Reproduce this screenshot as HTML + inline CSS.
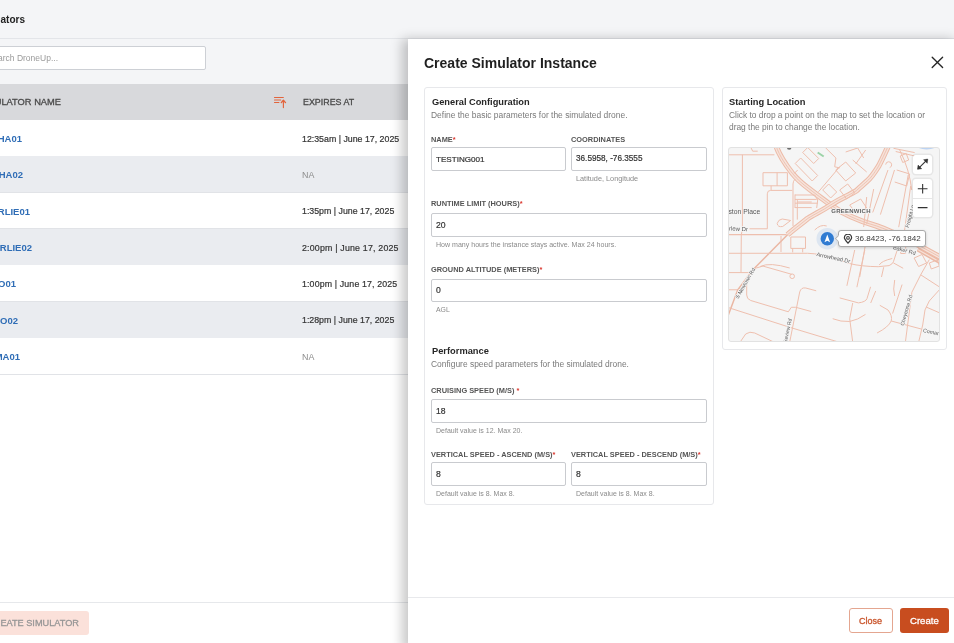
<!DOCTYPE html>
<html><head><meta charset="utf-8">
<style>
*{box-sizing:border-box;margin:0;padding:0}
html,body{width:954px;height:643px;overflow:hidden;background:#fff;font-family:"Liberation Sans",sans-serif;position:relative;-webkit-font-smoothing:antialiased}
.t{position:absolute;line-height:1;white-space:nowrap;will-change:transform}
.b{position:absolute}
</style></head><body>
<div class="b" style="left:0px;top:0px;width:954.00px;height:38.00px;background:#f4f5f7;"></div>
<div class="b" style="left:0px;top:38px;width:954.00px;height:1.00px;background:#e3e5e9;"></div>
<div class="b" style="left:0px;top:39px;width:954.00px;height:45.00px;background:#f4f5f7;"></div>
<div class="b" style="left:-10px;top:45.5px;width:216.00px;height:24.30px;background:#fff;border:1px solid #cdd0d5;border-radius:2px;"></div>
<div class="t" style="top:14.54px;font-size:10px;font-weight:bold;color:#222;left:-375.50px;width:400px;text-align:right;">Simulators</div>
<div class="t" style="top:53.70px;font-size:8.5px;font-weight:normal;color:#9a9a9a;left:-342.50px;width:400px;text-align:right;">Search DroneUp...</div>
<div class="b" style="left:0px;top:84px;width:954.00px;height:36.00px;background:#d8d9dc;"></div>
<div class="t" style="top:97.93px;font-size:9.3px;font-weight:normal;color:#4a4a4a;left:-338.70px;width:400px;text-align:right;-webkit-text-stroke:0.3px #4a4a4a;">SIMULATOR NAME</div>
<svg class="b" style="left:272px;top:95px" width="16" height="14" viewBox="0 0 16 14"><g stroke="#e2643c" stroke-width="1.15" fill="none" stroke-linecap="round"><path d="M2.5 2.5h8.8M2.5 5h6.2M2.5 7.5h4.4"/><path d="M11.4 12.6V5.6"/><path d="M9.3 7.6l2.1-2.3 2.1 2.3" stroke-width="1.4" stroke-linejoin="round"/></g></svg>
<div class="t" style="top:98.37px;font-size:8.9px;font-weight:normal;color:#4a4a4a;left:302.50px;-webkit-text-stroke:0.3px #4a4a4a;">EXPIRES AT</div>
<div class="b" style="left:0px;top:120.0px;width:954.00px;height:36.35px;background:#ffffff;"></div>
<div class="b" style="left:0px;top:155.75px;width:954.00px;height:1.00px;background:#e1e3e7;"></div>
<div class="t" style="top:133.96px;font-size:9.5px;font-weight:bold;color:#2f6db6;left:-378.50px;width:400px;text-align:right;">HA01</div>
<div class="t" style="top:134.55px;font-size:8.8px;font-weight:normal;color:#333;letter-spacing:0px;left:302.20px;-webkit-text-stroke:0.2px #333;">12:35am | June 17, 2025</div>
<div class="b" style="left:0px;top:156.35px;width:954.00px;height:36.35px;background:#eaecf0;"></div>
<div class="b" style="left:0px;top:192.1px;width:954.00px;height:1.00px;background:#e1e3e7;"></div>
<div class="t" style="top:170.31px;font-size:9.5px;font-weight:bold;color:#2f6db6;left:-377.10px;width:400px;text-align:right;">HA02</div>
<div class="t" style="top:170.82px;font-size:8.9px;font-weight:normal;color:#8c8c8c;left:302.20px;">NA</div>
<div class="b" style="left:0px;top:192.7px;width:954.00px;height:36.35px;background:#ffffff;"></div>
<div class="b" style="left:0px;top:228.45px;width:954.00px;height:1.00px;background:#e1e3e7;"></div>
<div class="t" style="top:206.66px;font-size:9.5px;font-weight:bold;color:#2f6db6;left:-370.30px;width:400px;text-align:right;">RLIE01</div>
<div class="t" style="top:207.25px;font-size:8.8px;font-weight:normal;color:#333;letter-spacing:0px;left:302.20px;-webkit-text-stroke:0.2px #333;">1:35pm | June 17, 2025</div>
<div class="b" style="left:0px;top:229.05px;width:954.00px;height:36.35px;background:#eaecf0;"></div>
<div class="b" style="left:0px;top:264.8px;width:954.00px;height:1.00px;background:#e1e3e7;"></div>
<div class="t" style="top:243.01px;font-size:9.5px;font-weight:bold;color:#2f6db6;left:-368.40px;width:400px;text-align:right;">RLIE02</div>
<div class="t" style="top:243.60px;font-size:8.8px;font-weight:normal;color:#333;letter-spacing:0.2px;left:302.20px;-webkit-text-stroke:0.2px #333;">2:00pm | June 17, 2025</div>
<div class="b" style="left:0px;top:265.4px;width:954.00px;height:36.35px;background:#ffffff;"></div>
<div class="b" style="left:0px;top:301.15px;width:954.00px;height:1.00px;background:#e1e3e7;"></div>
<div class="t" style="top:279.36px;font-size:9.5px;font-weight:bold;color:#2f6db6;left:-383.90px;width:400px;text-align:right;">O01</div>
<div class="t" style="top:279.95px;font-size:8.8px;font-weight:normal;color:#333;letter-spacing:0.14px;left:302.20px;-webkit-text-stroke:0.2px #333;">1:00pm | June 17, 2025</div>
<div class="b" style="left:0px;top:301.75px;width:954.00px;height:36.35px;background:#eaecf0;"></div>
<div class="b" style="left:0px;top:337.5px;width:954.00px;height:1.00px;background:#e1e3e7;"></div>
<div class="t" style="top:315.71px;font-size:9.5px;font-weight:bold;color:#2f6db6;left:-382.30px;width:400px;text-align:right;">O02</div>
<div class="t" style="top:316.30px;font-size:8.8px;font-weight:normal;color:#333;letter-spacing:0px;left:302.20px;-webkit-text-stroke:0.2px #333;">1:28pm | June 17, 2025</div>
<div class="b" style="left:0px;top:338.1px;width:954.00px;height:36.35px;background:#ffffff;"></div>
<div class="b" style="left:0px;top:373.85px;width:954.00px;height:1.00px;background:#e1e3e7;"></div>
<div class="t" style="top:352.06px;font-size:9.5px;font-weight:bold;color:#2f6db6;left:-379.70px;width:400px;text-align:right;">MA01</div>
<div class="t" style="top:352.57px;font-size:8.9px;font-weight:normal;color:#8c8c8c;left:302.20px;">NA</div>
<div class="b" style="left:0px;top:601.6px;width:954.00px;height:1.00px;background:#e6e8eb;"></div>
<div class="b" style="left:-10px;top:611px;width:99.10px;height:23.80px;background:#fbe1da;border-radius:3px;"></div>
<div class="t" style="top:619.21px;font-size:9.2px;font-weight:normal;color:#969696;left:-321.00px;width:400px;text-align:right;-webkit-text-stroke:0.3px #969696;">CREATE SIMULATOR</div>
<div class="b" style="left:407.5px;top:38.8px;width:552.50px;height:611.20px;background:#fff;box-shadow:-6px 0 11px rgba(0,0,0,.22);"></div>
<div class="t" style="top:55.95px;font-size:14px;font-weight:bold;color:#1f1f1f;left:424.20px;">Create Simulator Instance</div>
<svg class="b" style="left:930px;top:55px" width="15" height="15" viewBox="0 0 15 15"><path d="M2.2 2.2L12.6 12.6M12.6 2.2L2.2 12.6" stroke="#262626" stroke-width="1.35" stroke-linecap="round"/></svg>
<div class="b" style="left:424px;top:86.6px;width:290.00px;height:418.80px;background:#fff;border:1px solid #e7e8eb;border-radius:3px;"></div>
<div class="t" style="top:98.27px;font-size:9.25px;font-weight:bold;color:#262626;left:431.50px;">General Configuration</div>
<div class="t" style="top:110.85px;font-size:8.45px;font-weight:normal;color:#7a7a7a;left:431.30px;">Define the basic parameters for the simulated drone.</div>
<div class="t" style="top:135.94px;font-size:7.4px;font-weight:bold;color:#555;left:431.20px;">NAME<span style="color:#d9342b">*</span></div>
<div class="b" style="left:431.2px;top:147.2px;width:135.20px;height:24.10px;background:#fff;border:1px solid #c9cbcf;border-radius:2px;"></div>
<div class="t" style="top:155.54px;font-size:8.1px;font-weight:normal;color:#333;left:436.10px;-webkit-text-stroke:0.2px #333;">TESTING001</div>
<div class="t" style="top:135.94px;font-size:7.4px;font-weight:bold;color:#555;left:571.10px;">COORDINATES</div>
<div class="b" style="left:571.1px;top:147.2px;width:135.70px;height:24.10px;background:#fff;border:1px solid #c9cbcf;border-radius:2px;"></div>
<div class="t" style="top:155.46px;font-size:8.2px;font-weight:normal;color:#333;left:576.10px;-webkit-text-stroke:0.2px #333;">36.5958, -76.3555</div>
<div class="t" style="top:174.82px;font-size:7.3px;font-weight:normal;color:#8a8a8a;left:576.10px;">Latitude, Longitude</div>
<div class="t" style="top:200.34px;font-size:7.4px;font-weight:bold;color:#555;left:431.20px;">RUNTIME LIMIT (HOURS)<span style="color:#d9342b">*</span></div>
<div class="b" style="left:431.2px;top:212.5px;width:275.60px;height:24.10px;background:#fff;border:1px solid #c9cbcf;border-radius:2px;"></div>
<div class="t" style="top:220.72px;font-size:8.6px;font-weight:normal;color:#333;left:436.10px;-webkit-text-stroke:0.2px #333;">20</div>
<div class="t" style="top:240.63px;font-size:7.05px;font-weight:normal;color:#8a8a8a;left:436.20px;">How many hours the instance stays active. Max 24 hours.</div>
<div class="t" style="top:265.94px;font-size:7.4px;font-weight:bold;color:#555;left:431.20px;">GROUND ALTITUDE (METERS)<span style="color:#d9342b">*</span></div>
<div class="b" style="left:431.2px;top:278.6px;width:275.60px;height:23.10px;background:#fff;border:1px solid #c9cbcf;border-radius:2px;"></div>
<div class="t" style="top:286.02px;font-size:8.6px;font-weight:normal;color:#333;left:436.10px;-webkit-text-stroke:0.2px #333;">0</div>
<div class="t" style="top:306.76px;font-size:6.9px;font-weight:normal;color:#8a8a8a;left:436.40px;">AGL</div>
<div class="t" style="top:346.73px;font-size:9.3px;font-weight:bold;color:#262626;left:431.50px;">Performance</div>
<div class="t" style="top:359.85px;font-size:8.45px;font-weight:normal;color:#7a7a7a;left:431.30px;">Configure speed parameters for the simulated drone.</div>
<div class="t" style="top:386.84px;font-size:7.4px;font-weight:bold;color:#555;left:431.20px;">CRUISING SPEED (M/S) <span style="color:#d9342b">*</span></div>
<div class="b" style="left:431.2px;top:399.4px;width:275.60px;height:23.20px;background:#fff;border:1px solid #c9cbcf;border-radius:2px;"></div>
<div class="t" style="top:407.22px;font-size:8.6px;font-weight:normal;color:#333;left:436.10px;-webkit-text-stroke:0.2px #333;">18</div>
<div class="t" style="top:427.07px;font-size:7.0px;font-weight:normal;color:#8a8a8a;left:436.20px;">Default value is 12. Max 20.</div>
<div class="t" style="top:451.24px;font-size:7.4px;font-weight:bold;color:#555;left:431.20px;">VERTICAL SPEED - ASCEND (M/S)<span style="color:#d9342b">*</span></div>
<div class="b" style="left:431.2px;top:462.3px;width:135.20px;height:23.30px;background:#fff;border:1px solid #c9cbcf;border-radius:2px;"></div>
<div class="t" style="top:469.72px;font-size:8.6px;font-weight:normal;color:#333;left:436.10px;-webkit-text-stroke:0.2px #333;">8</div>
<div class="t" style="top:489.67px;font-size:7.0px;font-weight:normal;color:#8a8a8a;left:436.20px;">Default value is 8. Max 8.</div>
<div class="t" style="top:451.24px;font-size:7.4px;font-weight:bold;color:#555;left:571.10px;">VERTICAL SPEED - DESCEND (M/S)<span style="color:#d9342b">*</span></div>
<div class="b" style="left:571.1px;top:462.3px;width:135.70px;height:23.30px;background:#fff;border:1px solid #c9cbcf;border-radius:2px;"></div>
<div class="t" style="top:469.72px;font-size:8.6px;font-weight:normal;color:#333;left:576.10px;-webkit-text-stroke:0.2px #333;">8</div>
<div class="t" style="top:489.67px;font-size:7.0px;font-weight:normal;color:#8a8a8a;left:576.20px;">Default value is 8. Max 8.</div>
<div class="b" style="left:721.6px;top:86.6px;width:225.60px;height:263.20px;background:#fff;border:1px solid #e7e8eb;border-radius:3px;"></div>
<div class="t" style="top:97.93px;font-size:9.3px;font-weight:bold;color:#262626;left:728.50px;">Starting Location</div>
<div class="t" style="top:110.69px;font-size:8.4px;font-weight:normal;color:#7a7a7a;left:728.50px;">Click to drop a point on the map to set the location or</div>
<div class="t" style="top:122.69px;font-size:8.4px;font-weight:normal;color:#7a7a7a;left:728.50px;">drag the pin to change the location.</div>
<div class="b" style="left:728.3px;top:147px;width:211.4px;height:195.4px;overflow:hidden;border-radius:3px;background:#f5f5f5">
<svg width="211.4" height="195.4" viewBox="728.3 147 211.4 195.4" style="position:absolute;left:0;top:0;font-family:'Liberation Sans',sans-serif">
<ellipse cx="927" cy="144.5" rx="11" ry="5" fill="#bcd3f2"/>
<path d="M776 145 C780 157 787 166 792.6 173.3 C798 180 803 184 809 188.5 C816 194 823 199 831 205 C842 213 856 220 877 226 C897 233 915 243 942 258" stroke="#ecbba8" stroke-width="5.6" fill="none" stroke-linejoin="round" /><path d="M776 145 C780 157 787 166 792.6 173.3 C798 180 803 184 809 188.5 C816 194 823 199 831 205 C842 213 856 220 877 226 C897 233 915 243 942 258" stroke="#f6e3db" stroke-width="3.5999999999999996" fill="none" stroke-linejoin="round" /><path d="M776 145 C780 157 787 166 792.6 173.3 C798 180 803 184 809 188.5 C816 194 823 199 831 205 C842 213 856 220 877 226 C897 233 915 243 942 258" stroke="#ecbba8" stroke-width="0.8" fill="none" stroke-linejoin="round" /><path d="M889 145 C884 156 879 166 878.5 166.8 C874 174 871 178 867.6 180.9 C862 186 858 189 856.8 190.7 C848 196 840 199 831 205 C822 211 815 214 808 218.5 C800 225 793 230 787.8 234.8" stroke="#ecbba8" stroke-width="5.6" fill="none" stroke-linejoin="round" /><path d="M889 145 C884 156 879 166 878.5 166.8 C874 174 871 178 867.6 180.9 C862 186 858 189 856.8 190.7 C848 196 840 199 831 205 C822 211 815 214 808 218.5 C800 225 793 230 787.8 234.8" stroke="#f6e3db" stroke-width="3.5999999999999996" fill="none" stroke-linejoin="round" /><path d="M889 145 C884 156 879 166 878.5 166.8 C874 174 871 178 867.6 180.9 C862 186 858 189 856.8 190.7 C848 196 840 199 831 205 C822 211 815 214 808 218.5 C800 225 793 230 787.8 234.8" stroke="#ecbba8" stroke-width="0.8" fill="none" stroke-linejoin="round" /><path d="M787.8 234.8 L753.0 270.0 L738.0 290.0 L726.0 322.0" stroke="#eab7a3" stroke-width="1.5" fill="none" stroke-linejoin="round" /><path d="M918 249.5L942 263" stroke="#ebb8a4" stroke-width="4.2" fill="none" stroke-linejoin="round" /><path d="M918 249.5L942 263" stroke="#f6e0d7" stroke-width="1.2" fill="none" stroke-linejoin="round" /><path d="M729.0 154.8 L774.7 154.8" stroke="#eebfae" stroke-width="1.0" fill="none" stroke-linejoin="round" /><path d="M751 147.2l2 4h5" stroke="#eebfae" stroke-width="1.0" fill="none" stroke-linejoin="round" /><path d="M742.7 154.8 L742.7 229.4 L741.6 234.6 L741.3 272.5" stroke="#eebfae" stroke-width="1.0" fill="none" stroke-linejoin="round" /><path d="M763.3 172.7h24.4v13.1h-24.4z M777.4 172.7v13.1" stroke="#eebfae" stroke-width="1.0" fill="none" stroke-linejoin="round" /><path d="M771.4 185.8 L771.4 190.0" stroke="#eebfae" stroke-width="1.0" fill="none" stroke-linejoin="round" /><path d="M792.6 190.4H771q-3.4 0-3.4 3.4V228.8H749.8" stroke="#eebfae" stroke-width="1.0" fill="none" stroke-linejoin="round" /><path d="M729.0 234.6 L786.8 234.6" stroke="#eebfae" stroke-width="1.4" fill="none" stroke-linejoin="round" /><path d="M793.3 226V184q0-3 2.2-5" stroke="#eebfae" stroke-width="1.0" fill="none" stroke-linejoin="round" /><path d="M795.3 194.5V208" stroke="#eebfae" stroke-width="1.0" fill="none" stroke-linejoin="round" /><path d="M795.3 195.0 L815.0 195.0" stroke="#eebfae" stroke-width="1.0" fill="none" stroke-linejoin="round" /><path d="M795.3 199.4 L817.0 199.4" stroke="#eebfae" stroke-width="1.0" fill="none" stroke-linejoin="round" /><path d="M795.3 203.2 L818.0 203.2" stroke="#eebfae" stroke-width="1.0" fill="none" stroke-linejoin="round" /><path d="M795.3 207.6 L812.0 207.6" stroke="#eebfae" stroke-width="1.0" fill="none" stroke-linejoin="round" /><path d="M815 195l3 5-1 8" stroke="#eebfae" stroke-width="1.0" fill="none" stroke-linejoin="round" /><path d="M795.5 163.5l5.5-5.5 17 17.5-5.5 5.5z" stroke="#eebfae" stroke-width="1.0" fill="none" stroke-linejoin="round" /><path d="M803 152.5l5-5 11 11-5 5z" stroke="#eebfae" stroke-width="1.0" fill="none" stroke-linejoin="round" /><path d="M798 170l-3.5 3.5" stroke="#eebfae" stroke-width="1.0" fill="none" stroke-linejoin="round" /><path d="M818.0 152.5 L824.0 156.5" stroke="#9cd3a8" stroke-width="2.0" fill="none" stroke-linejoin="round" /><circle cx="789.5" cy="147.5" r="2.3" fill="#6d6d6d"/><path d="M825.3 147.2L836.2 158L835 166.8L840 167.9" stroke="#eebfae" stroke-width="1.0" fill="none" stroke-linejoin="round" /><path d="M818.8 191.8L840 166.8" stroke="#eebfae" stroke-width="1.0" fill="none" stroke-linejoin="round" /><path d="M823 190l6-6 8 8-6 6z" stroke="#eebfae" stroke-width="1.0" fill="none" stroke-linejoin="round" /><path d="M777.5 223.5q1-4 5-4.5l8.5 1.5-8 6q-5 1-5.5-3z" stroke="#eebfae" stroke-width="1.0" fill="none" stroke-linejoin="round" /><path d="M797.6 200V219.6 M797.6 202H812" stroke="#eebfae" stroke-width="1.0" fill="none" stroke-linejoin="round" /><path d="M791.1 237h14.7v11.4h-14.7z M793 248.4v4 M803 248.4v4" stroke="#eebfae" stroke-width="1.0" fill="none" stroke-linejoin="round" /><path d="M781.3 236.0 L781.3 252.0" stroke="#eebfae" stroke-width="1.0" fill="none" stroke-linejoin="round" /><path d="M729.0 253.3 L808.0 253.3" stroke="#eebfae" stroke-width="1.0" fill="none" stroke-linejoin="round" /><path d="M808 253.3Q820 253 850 263.6Q862 266.5 878.5 266.7L889.4 265.6Q893 264 893.7 261.8L898 248.7" stroke="#eebfae" stroke-width="1.0" fill="none" stroke-linejoin="round" /><path d="M893.8 148.3L915 152.6 M896 151.5L915 156" stroke="#eebfae" stroke-width="1.0" fill="none" stroke-linejoin="round" /><path d="M900.5 156l6-2.5 2.5 6.5-6 2.5z" stroke="#eebfae" stroke-width="1.0" fill="none" stroke-linejoin="round" /><path d="M888.3 170.0 L873.0 212.5" stroke="#eebfae" stroke-width="1.0" fill="none" stroke-linejoin="round" /><path d="M894.8 170.0 L880.7 214.6" stroke="#eebfae" stroke-width="1.0" fill="none" stroke-linejoin="round" /><path d="M886 164.6a3 3 0 1 1 4 3" stroke="#eebfae" stroke-width="1.0" fill="none" stroke-linejoin="round" /><path d="M897 170l13 4-3 12-12-4" stroke="#eebfae" stroke-width="1.0" fill="none" stroke-linejoin="round" /><path d="M908.5 175L899 227.2" stroke="#eebfae" stroke-width="1.0" fill="none" stroke-linejoin="round" /><path d="M846 152l12 -4 6 10" stroke="#eebfae" stroke-width="1.0" fill="none" stroke-linejoin="round" /><path d="M836 170l10 -8 10 11 -10 8z" stroke="#eebfae" stroke-width="1.0" fill="none" stroke-linejoin="round" /><path d="M840 190l8 -6 7 9 -8 6z" stroke="#eebfae" stroke-width="1.0" fill="none" stroke-linejoin="round" /><path d="M853 160l14 12" stroke="#eebfae" stroke-width="1.0" fill="none" stroke-linejoin="round" /><path d="M866 150l-10 14" stroke="#eebfae" stroke-width="1.0" fill="none" stroke-linejoin="round" /><path d="M850 205l11 -6 6 9 -10 6z" stroke="#eebfae" stroke-width="1.0" fill="none" stroke-linejoin="round" /><path d="M867 197l-3 30" stroke="#eebfae" stroke-width="1.0" fill="none" stroke-linejoin="round" /><path d="M874 189l-7 35" stroke="#eebfae" stroke-width="1.0" fill="none" stroke-linejoin="round" /><path d="M900 150q10 20 12 40" stroke="#eebfae" stroke-width="1.0" fill="none" stroke-linejoin="round" /><path d="M911 186L903 244" stroke="#eebfae" stroke-width="1.0" fill="none" stroke-linejoin="round" /><path d="M815 230q6 -6 12 -4" stroke="#eebfae" stroke-width="1.0" fill="none" stroke-linejoin="round" /><path d="M729.0 272.6 L752.0 272.6" stroke="#eebfae" stroke-width="1.0" fill="none" stroke-linejoin="round" /><path d="M729.0 289.8 L739.0 289.8" stroke="#eebfae" stroke-width="1.0" fill="none" stroke-linejoin="round" /><path d="M763.3 266.1L792 274.3 M763.3 266.1Q748 268 747 285V295Q747 299 751 300.5L788.6 311.8" stroke="#eebfae" stroke-width="1.0" fill="none" stroke-linejoin="round" /><circle cx="792.5" cy="276.3" r="2.3" stroke="#eebfae" stroke-width="1" fill="none"/><path d="M788.6 311.8l3-4.5h4.5L811.5 311.5" stroke="#eebfae" stroke-width="1.0" fill="none" stroke-linejoin="round" /><path d="M790 342L800 292Q801.4 287.2 806 288L816.5 290.8" stroke="#eebfae" stroke-width="1.0" fill="none" stroke-linejoin="round" /><path d="M729.0 307.7 L790.0 327.3 L838.6 342.0" stroke="#eebfae" stroke-width="1.0" fill="none" stroke-linejoin="round" /><path d="M740.5 342L746 334Q750 331 755 333L774 342" stroke="#eebfae" stroke-width="1.0" fill="none" stroke-linejoin="round" /><path d="M760.6 266.4Q770 262 790 268" stroke="#eebfae" stroke-width="1.0" fill="none" stroke-linejoin="round" /><path d="M753 270q-6 8-4 12" stroke="#eebfae" stroke-width="1.0" fill="none" stroke-linejoin="round" /><path d="M855.0 250.0 L847.2 285.8" stroke="#eebfae" stroke-width="1.0" fill="none" stroke-linejoin="round" /><path d="M865.1 250.0 L857.2 287.2" stroke="#eebfae" stroke-width="1.0" fill="none" stroke-linejoin="round" /><path d="M840 297.9L858.7 302.9Q866 302 867.3 298.6L870.9 286.8" stroke="#eebfae" stroke-width="1.0" fill="none" stroke-linejoin="round" /><path d="M853 303L850 318.7L853 342" stroke="#eebfae" stroke-width="1.0" fill="none" stroke-linejoin="round" /><path d="M833 318.7Q841 322 850 321.5Q858 320 865.8 314.4" stroke="#eebfae" stroke-width="1.0" fill="none" stroke-linejoin="round" /><path d="M880.1 305.3L888.3 310Q893 316 891.5 321Q889 327 877.4 333" stroke="#eebfae" stroke-width="1.0" fill="none" stroke-linejoin="round" /><path d="M891.5 321L921.5 329" stroke="#eebfae" stroke-width="1.0" fill="none" stroke-linejoin="round" /><path d="M905.7 342L912.2 292.2L921 274.8L929.6 259.6" stroke="#eebfae" stroke-width="1.0" fill="none" stroke-linejoin="round" /><path d="M921 274.8L939.5 286.8" stroke="#eebfae" stroke-width="1.0" fill="none" stroke-linejoin="round" /><path d="M939.5 290L929.6 301L925.3 310L923 325L919 342" stroke="#eebfae" stroke-width="1.0" fill="none" stroke-linejoin="round" /><path d="M926.4 307L939.5 312.7" stroke="#eebfae" stroke-width="1.0" fill="none" stroke-linejoin="round" /><path d="M902.4 284.6 L892.9 313.5" stroke="#eebfae" stroke-width="1.0" fill="none" stroke-linejoin="round" /><path d="M914.4 258l8-3.5 4.5 8.5-8 3.5z" stroke="#eebfae" stroke-width="1.0" fill="none" stroke-linejoin="round" /><path d="M929.6 263l8-3 2 6-8 3z" stroke="#eebfae" stroke-width="1.0" fill="none" stroke-linejoin="round" /><path d="M865.4 246.5 L860.0 277.0" stroke="#eebfae" stroke-width="1.0" fill="none" stroke-linejoin="round" /><path d="M884.0 267.2 L881.8 277.0" stroke="#eebfae" stroke-width="1.0" fill="none" stroke-linejoin="round" /><path d="M879.6 265q2-4 13-6.5" stroke="#eebfae" stroke-width="1.0" fill="none" stroke-linejoin="round" /><path d="M893.7 262.9 L903.5 268.3" stroke="#eebfae" stroke-width="1.0" fill="none" stroke-linejoin="round" /><path d="M901 246.5h5v7h-5z" stroke="#eebfae" stroke-width="1.0" fill="none" stroke-linejoin="round" /><path d="M876 291l-5 12" stroke="#eebfae" stroke-width="1.0" fill="none" stroke-linejoin="round" /><path d="M895 280q-2 10 0 16" stroke="#eebfae" stroke-width="1.0" fill="none" stroke-linejoin="round" />
<text x="720.5" y="213.6" font-size="6.8" fill="#5a5a5a" font-weight="normal" letter-spacing="0" transform="rotate(0 720.5 213.6)" stroke="#f5f5f5" stroke-width="1.5" paint-order="stroke">Easton Place</text><text x="721.5" y="230" font-size="6.0" fill="#5a5a5a" font-weight="normal" letter-spacing="0" transform="rotate(3 721.5 230)" stroke="#f5f5f5" stroke-width="1.5" paint-order="stroke">Curlew Dr</text><text x="831.6" y="213" font-size="6.0" fill="#606060" font-weight="bold" letter-spacing="0.25" transform="rotate(0 831.6 213)" stroke="#f5f5f5" stroke-width="1.5" paint-order="stroke">GREENWICH</text><text x="816.5" y="256" font-size="5.6" fill="#5a5a5a" font-weight="normal" letter-spacing="0" transform="rotate(12 816.5 256)" stroke="#f5f5f5" stroke-width="1.5" paint-order="stroke">Arrowhead Dr</text><text x="738.5" y="299" font-size="5.2" fill="#5a5a5a" font-weight="normal" letter-spacing="0" transform="rotate(-60 738.5 299)" stroke="#f5f5f5" stroke-width="1.5" paint-order="stroke">S Newtown Rd</text><text x="786" y="348" font-size="5.2" fill="#5a5a5a" font-weight="normal" letter-spacing="0" transform="rotate(-78 786 348)" stroke="#f5f5f5" stroke-width="1.5" paint-order="stroke">Lakeview Rd</text><text x="909" y="228" font-size="5.2" fill="#5a5a5a" font-weight="normal" letter-spacing="0" transform="rotate(-75 909 228)" stroke="#f5f5f5" stroke-width="1.5" paint-order="stroke">Freight Ln</text><text x="904" y="326" font-size="5.2" fill="#5a5a5a" font-weight="normal" letter-spacing="0" transform="rotate(-74 904 326)" stroke="#f5f5f5" stroke-width="1.5" paint-order="stroke">Cheyenne Rd</text><text x="923" y="332" font-size="5.4" fill="#5a5a5a" font-weight="normal" letter-spacing="0" transform="rotate(12 923 332)" stroke="#f5f5f5" stroke-width="1.5" paint-order="stroke">Comar</text><text x="893" y="249" font-size="5.6" fill="#5a5a5a" font-weight="normal" letter-spacing="0" transform="rotate(15 893 249)" stroke="#f5f5f5" stroke-width="1.5" paint-order="stroke">Baker Rd</text>
<circle cx="827.6" cy="238.7" r="10.8" fill="#dde6f1"/>
<circle cx="827.6" cy="238.7" r="6.7" fill="#2f7bd2"/>
<path d="M827.6 234.4L830.4 242.3L827.6 240.7L824.8 242.3Z" fill="#fff"/>
</svg>
<div class="b" style="left:109.9px;top:82.9px;width:88.2px;height:17px;background:#fff;border:1px solid #a9a9a9;border-radius:3px;box-shadow:0 1px 3px rgba(0,0,0,.18)"></div>
<div class="b" style="left:107.5px;top:88.9px;width:4.6px;height:4.6px;background:#fff;border-left:1px solid #b5b5b5;border-bottom:1px solid #b5b5b5;transform:rotate(45deg)"></div>
<svg class="b" style="left:114.7px;top:87.0px" width="10" height="10" viewBox="0 0 10 10"><path d="M5 9.2C3 7 1.4 5.2 1.4 3.8A3.6 3.6 0 0 1 8.6 3.8C8.6 5.2 7 7 5 9.2Z" fill="none" stroke="#3a3a3a" stroke-width="1.25"/><circle cx="5" cy="3.9" r="1.35" fill="none" stroke="#3a3a3a" stroke-width="1.05"/></svg>
<div class="t" style="left:126.7px;top:88.44px;font-size:8.1px;color:#3a3a3a">36.8423, -76.1842</div>
<div class="b" style="left:0;top:0;width:211.4px;height:195.4px;border:1px solid #e2e2e2;border-radius:3px"></div>
<div class="b" style="left:184.7px;top:8.0px;width:19.3px;height:18.6px;background:#fff;border-radius:3px;box-shadow:0 0 0 1.5px rgba(0,0,0,.06)"></div>
<svg class="b" style="left:184.7px;top:8.0px" width="19.3" height="18.6" viewBox="0 0 19.3 18.6"><g stroke="#333" stroke-width="1.1" fill="#333"><path d="M5 13.8L14.3 4.6"/><path d="M14.8 4.1l-4.2 0.6 3.6 3.6z" stroke-width="0.5"/><path d="M4.5 14.3l0.6 -4.2 3.6 3.6z" stroke-width="0.5"/></g></svg>
<div class="b" style="left:184.7px;top:31.6px;width:19.3px;height:38.5px;background:#fff;border-radius:3px;box-shadow:0 0 0 1.5px rgba(0,0,0,.06)"></div>
<div class="b" style="left:184.7px;top:50.6px;width:19.3px;height:0.7px;background:#e6e6e6"></div>
<svg class="b" style="left:184.7px;top:31.6px" width="19.3" height="38.5" viewBox="0 0 19.3 38.5"><g stroke="#333" stroke-width="1.1"><path d="M4.8 9.7h9.7M9.65 4.9v9.6M4.8 28.6h9.7"/></g></svg>
</div>
<div class="b" style="left:407.5px;top:597px;width:546.50px;height:1.00px;background:#e8e9ec;"></div>
<div class="b" style="left:849px;top:608.2px;width:43.60px;height:24.60px;background:#fff;border:1px solid #e4a690;border-radius:3px;"></div>
<div class="t" style="top:616.78px;font-size:9.0px;font-weight:normal;color:#c9552c;left:858.90px;-webkit-text-stroke:0.3px #c9552c;">Close</div>
<div class="b" style="left:899.7px;top:608.2px;width:49.60px;height:24.60px;background:#c84d1f;border-radius:3px;"></div>
<div class="t" style="top:616.27px;font-size:9.6px;font-weight:normal;color:#ffffff;left:909.60px;-webkit-text-stroke:0.3px #fff;">Create</div>
</body></html>
